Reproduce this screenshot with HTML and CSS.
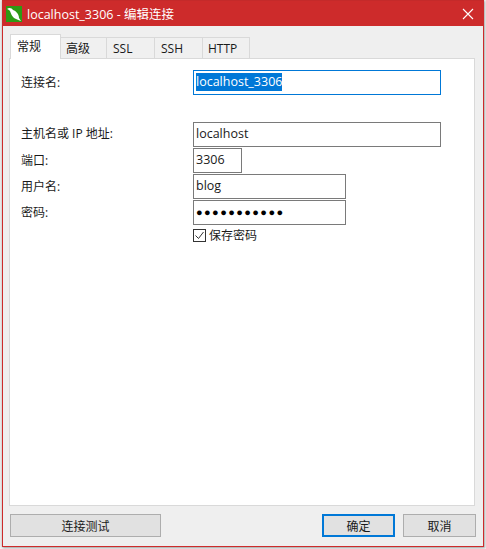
FILE: index.html
```html
<!DOCTYPE html>
<html lang="zh">
<head>
    <meta charset="UTF-8">
    <title>localhost_3306 - 编辑连接</title>
    <link rel="stylesheet" href="styles.css">
</head>
<body>

    <div class="window">
        <div class="titlebar">
            <svg class="app-icon" width="16" height="16" viewBox="0 0 16 16">
                <rect width="16" height="16" fill="#2e9a14"/>
                <path d="M1 3C3 1 6 2 7 4c3 1 6 4 6 8l2 3c-3-1-5-2-7-3C6 10 5 8 4 5 3 4 2 3 1 3z" fill="#fff"/>
            </svg>
            <span class="title">localhost_3306 - 编辑连接</span>
            <svg class="close" width="12" height="12" viewBox="0 0 12 12">
                <path d="M1 1l10 10M11 1L1 11" stroke="#fff" stroke-width="1.1" fill="none"/>
            </svg>
        </div>

        <div class="body">
            <div class="tabs">
                <span class="tab active">常规</span>
                <span class="tab cjk-tab">高级</span>
                <span class="tab">SSL</span>
                <span class="tab">SSH</span>
                <span class="tab">HTTP</span>
            </div>

            <div class="panel">
                <div class="row first-row">
                    <label>连接名:</label>
                    <div class="field wide focused"><span class="selected">localhost_3306</span></div>
                </div>
                <div class="row group-start">
                    <label>主机名或 IP 地址:</label>
                    <div class="field wide">localhost</div>
                </div>
                <div class="row">
                    <label class="low">端口:</label>
                    <div class="field small">3306</div>
                </div>
                <div class="row">
                    <label class="low">用户名:</label>
                    <div class="field medium">blog</div>
                </div>
                <div class="row">
                    <label class="low">密码:</label>
                    <div class="field medium dots">●●●●●●●●●●●</div>
                </div>
                <div class="row check-row">
                    <label></label>
                    <svg class="checkbox" width="13" height="13" viewBox="0 0 13 13">
                        <rect x="0.5" y="0.5" width="12" height="12" fill="#fff" stroke="#333"/>
                        <path d="M2.500 6.500l3 3 5-6.500" stroke="#333" fill="none"/>
                    </svg>
                    <span class="check-label">保存密码</span>
                </div>
            </div>

            <div class="buttons">
                <div class="btn test">连接测试</div>
                <div class="spacer"></div>
                <div class="btn ok">确定</div>
                <div class="btn cancel">取消</div>
            </div>
        </div>
    </div>

</body>
</html>
```

FILE: styles.css
```css
* { margin: 0; padding: 0; box-sizing: border-box; }
body { width: 486px; height: 549px; background: #f2f2f2; overflow: hidden; font-family: "Open Sans", "Noto Sans CJK SC", sans-serif; font-size: 12px; color: #1a1a1a; }
.window { width: 482px; height: 547px; margin-left: 2px; border: 1px solid #cd2b2b; border-top-color: #c42a2a; background: #efefef; display: flex; flex-direction: column; box-shadow: 1px 1px 2px rgba(0, 0, 0, 0.3), -1px 0 2px rgba(0, 0, 0, 0.12); }
.titlebar { height: 25px; flex: none; background: #cd2b2b; color: #fff; display: flex; align-items: center; padding: 0 9px 0 3px; font-size: 12.500px; }
.app-icon { flex: none; margin-right: 5px; }
.title { flex: 1; white-space: nowrap; }
.close { flex: none; }
.body { flex: 1; display: flex; flex-direction: column; padding: 8px 8px 9px 7px; min-height: 0; }
.tabs { display: flex; height: 24px; flex: none; align-items: flex-end; }
.tab { height: 21px; width: 49px; margin-left: -1px; border: 1px solid #d9d9d9; border-bottom: 0; background: #f0f0f0; display: flex; align-items: center; padding-left: 6px; font-size: 12px; }
.tab:last-child { width: 48px; padding-left: 5px; }
.tab.active { height: 25px; width: 51px; margin-left: 0; margin-bottom: -1px; background: #fff; position: relative; z-index: 1; padding-bottom: 3px; }
.tab.cjk-tab { padding-left: 5px; width: 47px; }
.panel { flex: 1; min-height: 0; background: #fff; border: 1px solid #d9d9d9; margin-left: -1px; padding: 11px 0 0 11px; }
.row { display: flex; align-items: center; height: 24px; margin-bottom: 2px; }
.first-row { height: 25px; }
.group-start { margin-top: 27px; }
.row label { width: 172px; flex: none; padding-bottom: 2px; }
.row label.low { padding-bottom: 0; }
.field { height: 25px; border: 1px solid #7a7a7a; background: #fff; padding-left: 2px; padding-bottom: 2px; display: flex; align-items: center; font-size: 12.500px; }
.wide { width: 248px; }
.small { width: 49px; }
.medium { width: 153px; }
.dots { font-family: "Liberation Sans", sans-serif; font-size: 11px; letter-spacing: 1.400px; color: #000; padding-bottom: 0; }
.focused { border-color: #0078d7; }
.selected { background: #0078d7; color: #fff; line-height: 18px; }
.check-row { height: 18px; margin-top: 1px; }
.checkbox { flex: none; margin-right: 3px; }
.buttons { display: flex; height: 23px; flex: none; margin: 8px -1px 0 0; }
.btn { height: 23px; background: #e1e1e1; border: 1px solid #adadad; display: flex; align-items: center; justify-content: center; font-size: 12px; }
.test { width: 151px; }
.spacer { flex: 1; }
.ok { width: 73px; border: 2px solid #0078d7; margin-right: 8px; }
.cancel { width: 73px; }
```
